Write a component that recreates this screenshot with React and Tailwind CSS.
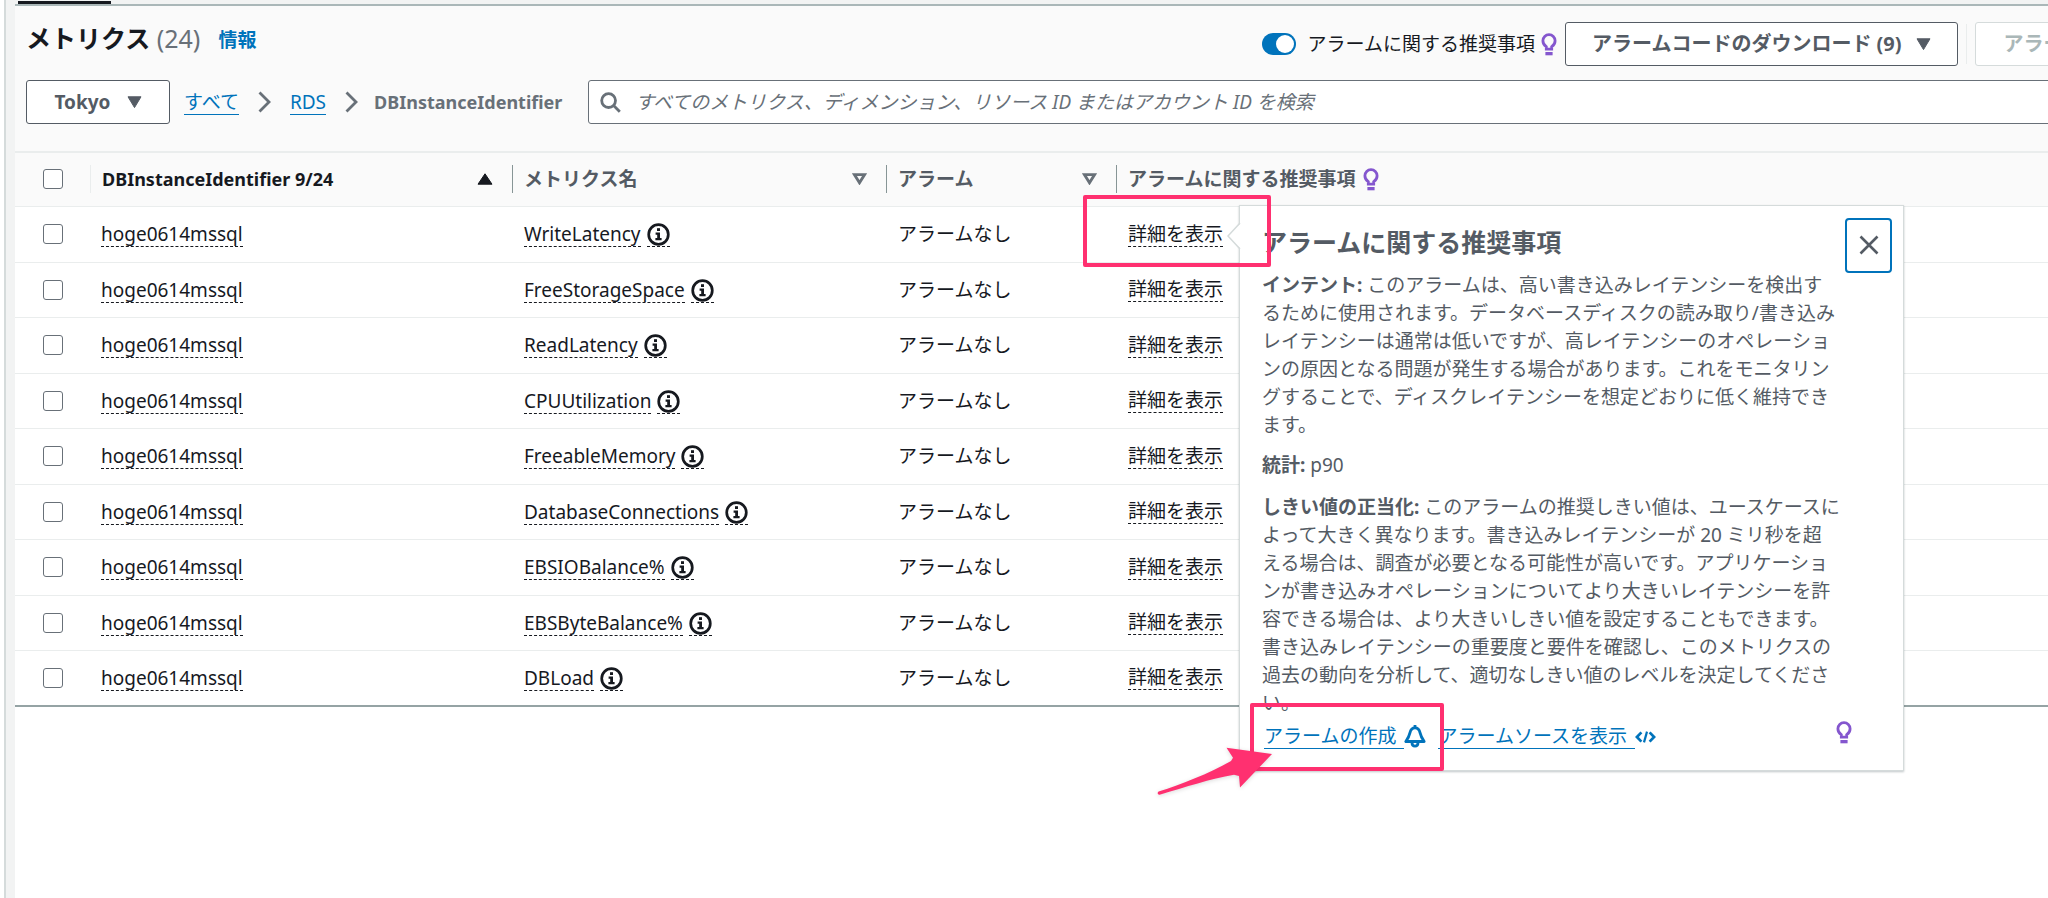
import React from "react";

const METRICS = [
  "WriteLatency",
  "FreeStorageSpace",
  "ReadLatency",
  "CPUUtilization",
  "FreeableMemory",
  "DatabaseConnections",
  "EBSIOBalance%",
  "EBSByteBalance%",
  "DBLoad",
];

const INSTANCE = "hoge0614mssql";

function BulbIcon() {
  return (
    <svg width="16" height="23" viewBox="0 0 16 23" fill="none" className="shrink-0" aria-hidden="true">
      <path
        d="M5.3 16.2V13.7C3 12.2 1.9 10.2 1.9 7.8C1.9 4.4 4.6 1.7 8 1.7C11.4 1.7 14.1 4.4 14.1 7.8C14.1 10.2 13 12.2 10.7 13.7V16.2Z"
        stroke="#8456ce"
        strokeWidth="2.8"
      />
      <path d="M4.4 19H11.6V22.3H4.4Z" fill="#8456ce" />
    </svg>
  );
}

function CaretDown() {
  return (
    <svg width="15" height="12" viewBox="0 0 15 12" className="shrink-0" aria-hidden="true">
      <path d="M1 0.8H14L7.5 11.6Z" fill="#545b64" stroke="#545b64" strokeLinejoin="round" />
    </svg>
  );
}

function SortAscending() {
  return (
    <svg width="16" height="12" viewBox="0 0 16 12" className="shrink-0" aria-hidden="true">
      <path d="M8 0.8L15 11.2H1Z" fill="#16191f" stroke="#16191f" strokeLinejoin="round" />
    </svg>
  );
}

function SortNone() {
  return (
    <svg width="15" height="12" viewBox="0 0 15 12" fill="none" className="shrink-0" aria-hidden="true">
      <path d="M2.4 1.6H12.6L7.5 9.8Z" stroke="#687078" strokeWidth="2.8" />
    </svg>
  );
}

function ChevronRight() {
  return (
    <svg width="13" height="22" viewBox="0 0 13 22" fill="none" className="shrink-0" aria-hidden="true">
      <path d="M1.5 1.5L11 11L1.5 20.5" stroke="#687078" strokeWidth="2.8" />
    </svg>
  );
}

function SearchIcon() {
  return (
    <svg width="21" height="21" viewBox="0 0 21 21" fill="none" className="shrink-0" aria-hidden="true">
      <circle cx="8.6" cy="8.6" r="6.9" stroke="#687078" strokeWidth="2.8" />
      <path d="M13.6 13.6L19.8 19.8" stroke="#687078" strokeWidth="2.8" />
    </svg>
  );
}

function InfoIcon() {
  return (
    <svg width="23" height="23" viewBox="0 0 23 23" fill="none" aria-hidden="true">
      <circle cx="11.5" cy="11.5" r="9.8" stroke="#16191f" strokeWidth="2.7" />
      <path d="M10 5.2H13V8H10Z" fill="#16191f" />
      <path d="M8.6 9.6H13V15H14.6V17.2H8.4V15H10.2V11.8H8.6Z" fill="#16191f" />
    </svg>
  );
}

function BellIcon() {
  return (
    <svg width="22" height="23" viewBox="0 0 22 23" fill="none" aria-hidden="true">
      <path
        d="M11 2.8C8 2.8 6.6 4.8 6 7.6C5.2 11.4 4 13.4 1.8 16.5H20.2C18 13.4 16.8 11.4 16 7.6C15.4 4.8 14 2.8 11 2.8Z"
        stroke="#0073bb"
        strokeWidth="2.8"
        strokeLinejoin="round"
      />
      <path d="M11 0V3" stroke="#0073bb" strokeWidth="2.8" />
      <path d="M8 17.8C8 20.2 9.2 21.2 11 21.2C12.8 21.2 14 20.2 14 17.8" stroke="#0073bb" strokeWidth="2.8" />
    </svg>
  );
}

function CodeIcon() {
  return (
    <svg width="21" height="14" viewBox="0 0 21 14" fill="none" aria-hidden="true">
      <path d="M6.4 2.4L1.9 7L6.4 11.6" stroke="#0073bb" strokeWidth="2.7" />
      <path d="M14.6 2.4L19.1 7L14.6 11.6" stroke="#0073bb" strokeWidth="2.7" />
      <path d="M12 1.6L9 12.4" stroke="#0073bb" strokeWidth="2.2" />
    </svg>
  );
}

function Tick({ label }) {
  return (
    <input
      type="checkbox"
      aria-label={label}
      className="block h-5 w-5 appearance-none rounded-[3px] border border-[#687078] bg-white checked:bg-[#0073bb]"
    />
  );
}

function HeaderCell({ children, icon, dark, first }) {
  return (
    <th scope="col" className="p-0 text-left font-bold">
      <div className="flex items-center">
        <span className={first ? "h-7 w-px bg-[#eaeded]" : "h-7 w-px bg-[#879596]"} />
        <span className={dark ? "ml-[11px] text-[18px] text-[#16191f]" : "ml-[11px] text-[#545b64]"}>{children}</span>
        {icon && (
          <button type="button" aria-label="並べ替え" className="mr-[19px] ml-auto">
            {icon}
          </button>
        )}
      </div>
    </th>
  );
}

function RecommendationPopover() {
  return (
    <div
      role="dialog"
      aria-label="アラームに関する推奨事項"
      className="absolute -top-[17px] left-full z-20 ml-4 flex h-[566px] w-[665px] flex-col border border-[#d5dbdb] bg-white pr-[11px] pl-[22px] text-[#545b64] shadow-[0_1px_2px_rgba(0,28,36,0.25)]"
    >
      <svg
        width="14"
        height="28"
        viewBox="0 0 14 28"
        className="absolute top-4 -left-[13px]"
        aria-hidden="true"
      >
        <path d="M14 1L1 14L14 27Z" fill="#fff" />
        <path d="M13 1L1 14L13 27" fill="none" stroke="#d5dbdb" strokeWidth="1.5" />
      </svg>
      <div className="flex items-start justify-between pt-3">
        <h2 className="pt-2 text-[25px] leading-8 font-bold">アラームに関する推奨事項</h2>
        <button
          type="button"
          aria-label="閉じる"
          className="flex h-[55px] w-[47px] items-center justify-center rounded border-2 border-[#0073bb]"
        >
          <svg width="20" height="20" viewBox="0 0 20 20" fill="none" aria-hidden="true">
            <path d="M1.5 1.5L18.5 18.5M18.5 1.5L1.5 18.5" stroke="#545b64" strokeWidth="2.6" />
          </svg>
        </button>
      </div>
      <div className="w-[582px] leading-7">
        <p className="-mt-0.5">
          <b>インテント:</b> このアラームは、高い書き込みレイテンシーを検出す
          <br />
          るために使用されます。データベースディスクの読み取り/書き込みレイテンシーは通常は低いですが、高レイテンシーのオペレーションの原因となる問題が発生する場合があります。これをモニタリングすることで、ディスクレイテンシーを想定どおりに低く維持できます。
        </p>
        <p className="mt-3">
          <b>統計:</b> p90
        </p>
        <p className="mt-3.5">
          <b>しきい値の正当化:</b>{" "}
          このアラームの推奨しきい値は、ユースケースによって大きく異なります。書き込みレイテンシーが 20
          ミリ秒を超
          <br />
          える場合は、調査が必要となる可能性が高いです。アプリケーションが書き込みオペレーションについてより大きいレイテンシーを許容できる場合は、より大きいしきい値を設定することもできます。書き込みレイテンシーの重要度と要件を確認し、このメトリクスの過去の動向を分析して、適切なしきい値のレベルを決定してください。
        </p>
      </div>
      <div className="mt-auto mb-[17px] flex h-8 shrink-0 items-center pl-0.5 text-[#0073bb]">
        <a href="#create" className="flex items-center">
          <span className="border-b border-[#0073bb] pr-2 leading-6">アラームの作成</span>
          <BellIcon />
        </a>
        <a href="#source" className="ml-3 flex items-center">
          <span className="border-b border-[#0073bb] pr-2 leading-6">アラームソースを表示</span>
          <CodeIcon />
        </a>
        <span className="mr-10 mb-2 ml-auto">
          <BulbIcon />
        </span>
      </div>
    </div>
  );
}

export default function App() {
  return (
    <div className="relative flex min-h-screen overflow-hidden bg-[#f2f3f3] font-['Noto_Sans','Noto_Sans_CJK_JP',sans-serif] text-[19px] leading-7 text-[#16191f]">
      <div className="w-[6px] shrink-0 border-r-2 border-[#d5dbdb] bg-white" />
      <div className="ml-[9px] flex min-w-0 flex-1 flex-col">
        <div className="flex h-1 items-end pl-[3px]">
          <span className="h-[3px] w-[93px] bg-[#16191f]" />
        </div>
        <main className="flex-1 overflow-hidden border-t-2 border-[#aab7b8] bg-white">
          <header className="w-[calc(100%+144px)] bg-[#fafafa] pt-4 pr-5 pb-[27px] pl-[11px]">
            <div className="flex items-start justify-between">
              <div className="flex items-center whitespace-nowrap">
                <h1 className="text-[25px] leading-8 font-bold">
                  メトリクス <span className="font-normal text-[#687078]">(24)</span>
                </h1>
                <a href="#info" className="ml-[18px] pt-1 font-bold text-[#0073bb]">
                  情報
                </a>
              </div>
              <div className="flex h-11 items-center whitespace-nowrap">
                <label className="flex items-center">
                  <input
                    type="checkbox"
                    role="switch"
                    defaultChecked
                    className="mr-3 flex h-[22px] w-[34px] appearance-none items-center justify-end rounded-full bg-[#0073bb] pr-0.5 before:h-[18px] before:w-[18px] before:rounded-full before:bg-white"
                  />
                  アラームに関する推奨事項
                  <span className="ml-1.5">
                    <BulbIcon />
                  </span>
                </label>
                <button
                  type="button"
                  className="ml-2 flex h-11 items-center gap-3.5 rounded-[3px] border border-[#545b64] bg-white px-[26px] text-[20px] font-bold text-[#545b64]"
                >
                  アラームコードのダウンロード (9)
                  <CaretDown />
                </button>
                <span className="mx-2 h-10 w-px bg-[#eaeded]" />
                <button
                  type="button"
                  disabled
                  className="h-11 rounded-[3px] border border-[#d5dbdb] bg-white px-7 text-[20px] font-bold text-[#aab7b8]"
                >
                  アラームの作成
                </button>
              </div>
            </div>
            <div className="mt-[14px] flex h-11 items-center">
              <button
                type="button"
                className="flex h-11 w-36 items-center justify-center gap-4 rounded-[3px] border border-[#545b64] bg-white font-bold text-[#545b64]"
              >
                Tokyo
                <CaretDown />
              </button>
              <nav aria-label="パンくずリスト" className="ml-[14px] flex items-center whitespace-nowrap">
                <a href="#all" className="border-b border-[#0073bb] leading-6 text-[#0073bb]">
                  すべて
                </a>
                <span className="mx-[19px]">
                  <ChevronRight />
                </span>
                <a href="#rds" className="border-b border-[#0073bb] leading-6 text-[#0073bb]">
                  RDS
                </a>
                <span className="mr-4 ml-[19px]">
                  <ChevronRight />
                </span>
                <span className="text-[18px] font-bold text-[#687078]">DBInstanceIdentifier</span>
              </nav>
              <label className="ml-[26px] flex h-11 flex-1 items-center rounded-[3px] border border-[#687078] bg-white pl-[11px]">
                <SearchIcon />
                <input
                  type="search"
                  aria-label="メトリクスを検索"
                  placeholder="すべてのメトリクス、ディメンション、リソース ID またはアカウント ID を検索"
                  className="ml-[14px] h-10 flex-1 outline-none placeholder:text-[#687078] placeholder:italic"
                />
              </label>
            </div>
          </header>

          <table className="w-full table-fixed border-collapse border-b-2 border-[#95a3a4]">
            <colgroup>
              <col className="w-[75px]" />
              <col className="w-[422px]" />
              <col className="w-[374px]" />
              <col className="w-[230px]" />
              <col />
            </colgroup>
            <thead>
              <tr className="h-[54px] border-t-2 border-b border-[#eaeded] bg-[#fafafa]">
                <th scope="col" className="p-0 pl-7">
                  <Tick label="すべて選択" />
                </th>
                <HeaderCell first dark icon={<SortAscending />}>
                  DBInstanceIdentifier 9/24
                </HeaderCell>
                <HeaderCell icon={<SortNone />}>メトリクス名</HeaderCell>
                <HeaderCell icon={<SortNone />}>アラーム</HeaderCell>
                <HeaderCell>
                  <span className="flex items-center gap-2">
                    アラームに関する推奨事項
                    <BulbIcon />
                  </span>
                </HeaderCell>
              </tr>
            </thead>
            <tbody>
              {METRICS.map((metric, i) => (
                <tr key={metric} className="border-b border-[#eaeded] odd:h-[56px] even:h-[55px] last:border-b-0">
                  <td className="p-0 pl-7">
                    <Tick label={metric} />
                  </td>
                  <td className="p-0 pt-px pl-[11px]">
                    <button type="button" className="block border-b border-dashed border-[#16191f] leading-6">
                      {INSTANCE}
                    </button>
                  </td>
                  <td className="p-0 pt-px pl-3">
                    <div className="flex items-center gap-1.5">
                      <button type="button" className="border-b border-dashed border-[#16191f] leading-6">
                        {metric}
                      </button>
                      <button
                        type="button"
                        aria-label={metric + " の情報"}
                        className="flex h-[25px] items-end border-b border-dashed border-[#16191f]"
                      >
                        <InfoIcon />
                      </button>
                    </div>
                  </td>
                  <td className="p-0 pl-3">アラームなし</td>
                  <td className="p-0 pl-3">
                    <div className="relative w-fit">
                      <button type="button" className="block border-b border-dashed border-[#16191f] leading-6">
                        詳細を表示
                      </button>
                      {i === 0 && <RecommendationPopover />}
                    </div>
                  </td>
                </tr>
              ))}
            </tbody>
          </table>
        </main>
      </div>

      <div className="pointer-events-none absolute top-[195px] left-[1083px] z-30 h-[72px] w-[188px] rounded-[2px] border-4 border-[#ff3070]" />
      <div className="pointer-events-none absolute top-[703px] left-[1250px] z-30 h-[68px] w-[194px] rounded-[2px] border-4 border-[#ff3070]" />
      <svg
        width="124"
        height="56"
        viewBox="0 0 124 56"
        className="pointer-events-none absolute top-[743px] left-[1152px] z-30 drop-shadow-sm"
        aria-hidden="true"
      >
        <path
          d="M120 11L74.5 4.7L81 14.8L79 18C56 31 30 41 6.6 48.6C5 49.4 5.6 52 7.6 51.8C34 44 58 36 82 31.8L87 33L88 44.6Z"
          fill="#ff3070"
        />
      </svg>
    </div>
  );
}
